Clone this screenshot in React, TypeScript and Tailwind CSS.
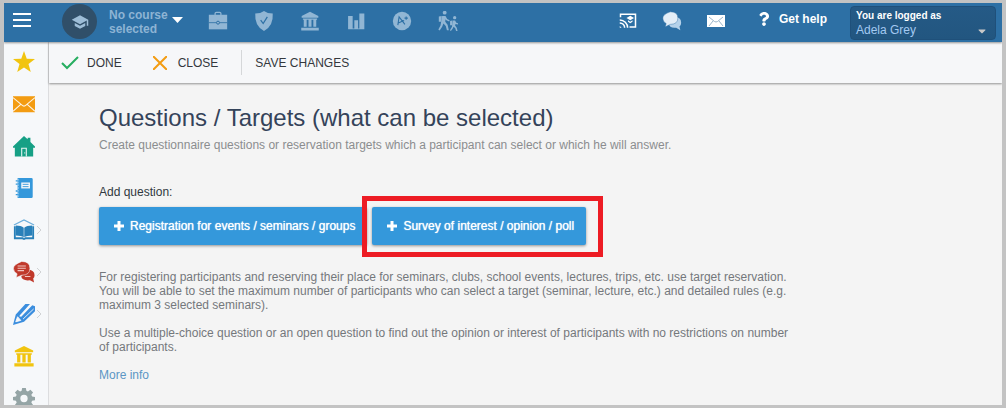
import type { ReactNode } from "react";
import { FaCaretDown, FaQuestion } from "react-icons/fa";

interface IconProps {
  size?: number;
  children: ReactNode;
}

// All pictograms share one 24x24 grid
function Icon({ size = 22, children }: IconProps) {
  return (
    <svg width={size} height={size} viewBox="0 0 24 24" fill="currentColor" aria-hidden="true" className="shrink-0">
      {children}
    </svg>
  );
}

const BankShape = () => (
  <path d="M12 1 2 6v2h20V6zM3.500 9h17v1.500h-17zM4.500 10.500h3.500V19H4.500zM10.200 10.500h3.600V19h-3.600zM16 10.500h3.500V19H16zM1.500 20h21v3.500h-21z" />
);

const courseLinks = [
  {
    label: "Agenda",
    icon: (
      <>
        <path d="M1 4.500h22V22H1z" />
        <path d="M8.500 5V3q0-1.500 1.500-1.500h4q1.500 0 1.500 1.500v2" fill="none" stroke="currentColor" strokeWidth="1.500" />
        <path d="M1 14h9M14 14h9" stroke="#2d70a5" strokeWidth="1" />
        <circle cx="12" cy="14" r="1.800" fill="none" stroke="#2d70a5" strokeWidth="1.200" />
      </>
    ),
  },
  {
    label: "Safety",
    icon: (
      <>
        <path d="M12 0q4 3 10.500 3 1 15-10.500 21Q.500 18 1.500 3 8 3 12 0z" />
        <path d="m8 11 3 4 5-8" fill="none" stroke="#2d70a5" strokeWidth="1.500" />
      </>
    ),
  },
  { label: "School", icon: <BankShape /> },
  { label: "Statistics", icon: <path d="M2.500 6H8v16H2.500zM10 11h4.500v11H10zM16 3h6v19h-6zM2.500 21H22v1H2.500z" /> },
  {
    label: "Grades",
    icon: (
      <>
        <circle cx="12" cy="12" r="11" />
        <path d="m7 17 1.500-10 7 9M7.500 14.500l7-3M15 8.500h4M17 6.500v4" fill="none" stroke="#2d70a5" strokeWidth="1.300" />
      </>
    ),
  },
  {
    label: "Attendance",
    icon: (
      <>
        <circle cx="8" cy="2" r="2.300" />
        <path d="M1 6.500 4.500 6 4 13H1z" />
        <path d="M5 6h4l2 3.500 3 1.500-.6 1.600L10 11l-1-1-.3 3 2.800 3.500L13 23h-2.300l-1.400-5-2.800-3L5 19l-3 4.500-1.600-1.300L3 17.500z" />
        <circle cx="20" cy="8" r="2" />
        <path d="M14.500 12 17 11.500V17h-2.500z" />
        <path d="M17.500 11.500h3l1.500 2.500 2.500 1-.5 1.300-3-.8-.5 2 2 2.500 1 4h-1.800l-1-3.400-2-1.600-1 2-2.200 3-1.200-1 2.500-4z" />
      </>
    ),
  },
];

const sideLinks = [
  {
    label: "Favourites",
    color: "text-[#f1c40f]",
    arrow: false,
    icon: <path d="m12 0 3 8.500 9 .2-7.100 5.500L19.400 23 12 18l-7.400 5 2.500-8.800L0 8.700l9-.2z" />,
  },
  {
    label: "Messages",
    color: "text-[#f39c12]",
    arrow: false,
    icon: (
      <>
        <path d="M0 3.500h24v17.500H0z" />
        <path
          d="m0 5 9.500 8q2.500 2.500 5 0L24 5M0 20l8.500-7.500M24 20l-8.500-7.500"
          fill="none"
          stroke="#fdf3e2"
          strokeWidth="1.200"
        />
      </>
    ),
  },
  {
    label: "Home",
    color: "text-[#16a085]",
    arrow: false,
    icon: (
      <>
        <path d="m12 1 4 3.500V3h3v4.500l5 5V14h-2v9.500H2V14H0v-1.500z" />
        <path d="M9.500 23.500V14.500h5v9" fill="none" stroke="#e6f5f2" strokeWidth="1.200" />
        <path d="M12.800 18.500v2" stroke="#e6f5f2" strokeWidth=".7" />
      </>
    ),
  },
  {
    label: "Notebook",
    color: "text-[#3498db]",
    arrow: false,
    icon: (
      <>
        <path d="M5 1h15q1.500 0 1.500 1.500v19q0 1.500-1.500 1.500H5zM3 3.500h3V5H3zM3 7h3v1.500H3zM3 14.500h3V16H3zM3 18.500h3V20H3z" />
        <path d="M5.500 2v20" stroke="#b9dcf4" strokeWidth="1" strokeDasharray="2 1" />
        <path d="M9 6h9.500v6.500H9z" fill="#f6f7f9" />
        <path d="M10.500 8h6.500M10.500 10.500h6.500" stroke="currentColor" strokeWidth="1" />
      </>
    ),
  },
  {
    label: "Library",
    color: "text-[#2980b9]",
    arrow: true,
    icon: (
      <>
        <path d="M1 6.500 12 1l11 5.500" fill="none" stroke="#6caedb" strokeWidth="1.300" />
        <path d="M1 8h2v12h8l1 1 1-1h8V8h2v14h-9l-2 1-2-1H1z" />
        <path d="M3 7q6 0 8.700 2.500V20Q9 18 3 18zM21 7q-6 0-8.700 2.500V20Q15 18 21 18z" />
      </>
    ),
  },
  {
    label: "Discussion",
    color: "text-[#c0392b]",
    arrow: true,
    icon: (
      <>
        <path d="M16 9.500q7.500 0 7.500 6 0 2.500-1.500 3.500l1 4.500-4.500-2.500Q10 22 9 17z" />
        <path
          d="M9.500.500q9 0 9 7.500t-9 7.500L3.500 18l1-4Q.500 12 .500 8t9-7.500z"
          stroke="#f6f7f9"
          strokeWidth=".6"
        />
        <path d="M5 5.500h9M5 8h9M5 10.500h7M13 17h6" stroke="#f1c5c0" strokeWidth="1.100" />
      </>
    ),
  },
  {
    label: "Editor",
    color: "text-[#3b8ede]",
    arrow: true,
    icon: (
      <>
        <path d="M0 24 3 12.500 13.500 1h5L7 14l2 1L21 2.500l3 1V9L12 20.500z" />
        <path d="m3 20.500 2-5.500 3.500 4zM7.500 15 19.500 2.500M11 17.500l11.500-11" fill="#f6f7f9" stroke="#f6f7f9" strokeWidth="1" />
      </>
    ),
  },
  { label: "Institution", color: "text-[#f1c40f]", arrow: false, icon: <BankShape /> },
  {
    label: "Settings",
    color: "text-[#95a5a6]",
    arrow: false,
    icon: (
      <path
        fillRule="evenodd"
        d="M10 1h4l.6 3.200 1.700.7L19 3l2.900 2.900L20 8.500l.8 1.800L24 11v3.500l-3.200.6-.8 1.700 1.900 2.700L19 22.300l-2.700-1.900-1.700.8L14 24h-4l-.6-2.800-1.700-.8L5 22.300l-2.900-2.800L4 16.800l-.8-1.700L0 14.500V11l3.200-.7L4 8.500 2.100 5.900 5 3l2.700 1.900 1.700-.7zM12 8.500a4 4 0 1 0 0 8 4 4 0 0 0 0-8z"
      />
    ),
  },
];

function Header() {
  return (
    <header className="relative z-20 flex h-[39px] shrink-0 items-center justify-between bg-[#2d70a5] shadow-[0_1px_2px_rgba(0,0,0,0.4)]">
      <div className="flex items-center pb-0.5">
        <button aria-label="Menu" className="mb-1 ml-[9px]">
          <svg width="18" height="14" viewBox="0 0 18 14" fill="white" aria-hidden="true">
            <path d="M0 0h18v2H0zM0 6h18v2H0zM0 12h18v2H0z" />
          </svg>
        </button>
        <button className="ml-[31px] flex items-center text-left text-xs leading-[14px] font-bold text-[#8db4d4]">
          <span className="flex size-[35px] items-center justify-center rounded-full bg-[#304f69]">
            <svg width="18" height="18" viewBox="0 0 24 24" fill="#9dbdd7" aria-hidden="true">
              <path d="M12 3 1 9l11 6 9-4.900V17h2V9zM5 13.200v4L12 21l7-3.800v-4L12 17z" />
            </svg>
          </span>
          <span className="ml-3 w-[60px]">No course selected</span>
          <svg width="11" height="6" viewBox="0 0 11 6" fill="white" className="mb-1 ml-[3px]" aria-hidden="true">
            <path d="M0 0h11L5.500 6z" />
          </svg>
        </button>
        <nav className="mb-0.5 ml-[25px] flex gap-[26px] text-[#91b6d4]">
          {courseLinks.map(link => (
            <a key={link.label} href="#" aria-label={link.label}>
              <Icon size={20}>{link.icon}</Icon>
            </a>
          ))}
        </nav>
      </div>

      <div className="flex items-center text-white">
        <div className="mb-1 flex items-center">
          <a href="#" aria-label="Cast">
            <svg width="18" height="18" viewBox="0 0 24 24" fill="none" stroke="white" strokeWidth="2" aria-hidden="true">
              <path d="M2 7V3h20v17h-8M1 10.500A10.500 10.500 0 0 1 11.500 21M1 14.500A6.500 6.500 0 0 1 7.500 21" />
              <path d="M1 18.500 3.500 21H1z" fill="white" stroke="none" />
              <path d="m15 5-5 3 5 3 5-3zM12 11v2l3 2 3-2v-2l-3 2z" fill="white" stroke="none" />
            </svg>
          </a>
          <a href="#" aria-label="Chat" className="ml-[25px]">
            <svg width="20" height="20" viewBox="0 0 24 24" aria-hidden="true">
              <path d="M14 7q9 0 9 7 0 3-2 4.500l1 4.500-5-3q-8 1-9-5z" fill="#b5d2ea" />
              <path d="M10 1q9 0 9 7.500T10 16l-6 3 1-4q-4-2-4-6.500T10 1z" fill="#e4eef7" stroke="#2d70a5" strokeWidth=".5" />
            </svg>
          </a>
          <a href="#" aria-label="Mail" className="ml-[25px]">
            <svg width="18" height="12" viewBox="0 0 18 12" aria-hidden="true">
              <path d="M0 0h18v12H0z" fill="white" />
              <path d="m2 2 5.500 4.500q1.500 1 3 0L16 2M2 11l4-5M16 11l-4-5" fill="none" stroke="#9ab5ca" />
            </svg>
          </a>
        </div>
        <a href="#" className="mb-2 ml-8 flex items-center text-xs font-bold">
          <FaQuestion className="mr-2 size-[14px]" />
          Get help
        </a>
        <button className="mr-[6px] ml-[23px] flex h-[34px] w-[146px] items-end justify-between rounded-sm border border-[#1f507a] bg-linear-to-b from-[#255a86] to-[#225680] px-[5px] pb-0.5 text-left text-xs leading-[14px] text-[#a3c9f1]">
          <span>
            <strong className="block text-[10px] leading-[14px] text-white">You are logged as</strong>
            Adela Grey
          </span>
          <FaCaretDown className="mr-0.5 size-3 text-[#c8c8c8]" />
        </button>
      </div>
    </header>
  );
}

function Sidebar() {
  return (
    <nav className="w-[45px] shrink-0 overflow-hidden border-r border-[#dcdddf] bg-[#f6f8fa] pl-[9px]">
      {sideLinks.map(link => (
        <a
          key={link.label}
          href="#"
          aria-label={link.label}
          className={`flex h-[42px] items-center pb-0.5 ${link.color}`}
        >
          <Icon>{link.icon}</Icon>
          {link.arrow && (
            <svg
              width="6"
              height="10"
              viewBox="0 0 6 10"
              fill="none"
              stroke="#d0d2d4"
              className="ml-px"
              aria-hidden="true"
            >
              <path d="m1 1 4 4-4 4" />
            </svg>
          )}
        </a>
      ))}
    </nav>
  );
}

function Toolbar() {
  return (
    <div className="relative z-10 flex h-[41px] shrink-0 items-center bg-[#f6f7f9] pl-3 text-xs text-[#34383d] shadow-[0_1px_2px_rgba(0,0,0,0.4)]">
      <button className="flex items-center gap-2">
        <svg width="18" height="14" viewBox="0 0 18 14" fill="none" stroke="#27ae60" strokeWidth="2" aria-hidden="true">
          <path d="m1 7 5 5L17 1" />
        </svg>
        DONE
      </button>
      <button className="ml-[31px] flex items-center gap-[11px]">
        <svg width="14" height="14" viewBox="0 0 14 14" fill="none" stroke="#f39c12" strokeWidth="2" aria-hidden="true">
          <path d="m0 0 14 14M14 0 0 14" />
        </svg>
        CLOSE
      </button>
      <button className="ml-[23px] h-[25px] border-l border-[#d5d7d9] pl-[13px]">SAVE CHANGES</button>
    </div>
  );
}

function AddButton({ children }: { children: ReactNode }) {
  return (
    <button className="flex h-[38px] items-center gap-[6px] rounded-xs bg-[#3498db] pr-3 pl-[15px] text-xs whitespace-nowrap text-white shadow-[0_1px_3px_rgba(0,0,0,0.4)] text-shadow-[0_0_1px_white]">
      <svg width="10" height="10" viewBox="0 0 10 10" aria-hidden="true">
        <path d="M5 0v10M0 5h10" stroke="white" strokeWidth="3" />
      </svg>
      {children}
    </button>
  );
}

export default function App() {
  return (
    <div className="flex h-screen flex-col overflow-hidden border-x-4 border-y-3 border-[#c3c3c3] bg-[#f4f4f4] font-['Liberation_Sans',Arial,sans-serif]">
      <Header />
      <div className="flex min-h-0 flex-1">
        <Sidebar />
        <div className="flex min-w-0 flex-1 flex-col">
          <Toolbar />
          <main className="px-[50px] pt-5 text-xs leading-[14px] text-[#74787c]">
            <h1 className="text-2xl leading-[30px] text-[#34435a]">Questions / Targets (what can be selected)</h1>
            <p className="mt-[5px] text-[#8b8d8f]">
              Create questionnaire questions or reservation targets which a participant can select or which he will
              answer.
            </p>
            <p className="mt-[33px] text-[#303840]">Add question:</p>
            <div className="mt-2 flex gap-[5px]">
              <AddButton>Registration for events / seminars / groups</AddButton>
              <div className="relative">
                <AddButton>Survey of interest / opinion / poll</AddButton>
                <div className="pointer-events-none absolute -top-[11px] -right-[17px] -bottom-3 -left-[10px] border-5 border-[#ed1c24]" />
              </div>
            </div>
            <div className="mt-[25px] max-w-[700px] space-y-[14px]">
              <p>
                For registering participants and reserving their place for seminars, clubs, school events, lectures,
                trips, etc. use target reservation. You will be able to set the maximum number of participants who can
                select a target (seminar, lecture, etc.) and detailed rules (e.g. maximum 3 selected seminars).
              </p>
              <p>
                Use a multiple-choice question or an open question to find out the opinion or interest of participants
                with no restrictions on number of participants.
              </p>
              <a href="#" className="block text-[#5b96c4]">
                More info
              </a>
            </div>
          </main>
        </div>
      </div>
    </div>
  );
}
